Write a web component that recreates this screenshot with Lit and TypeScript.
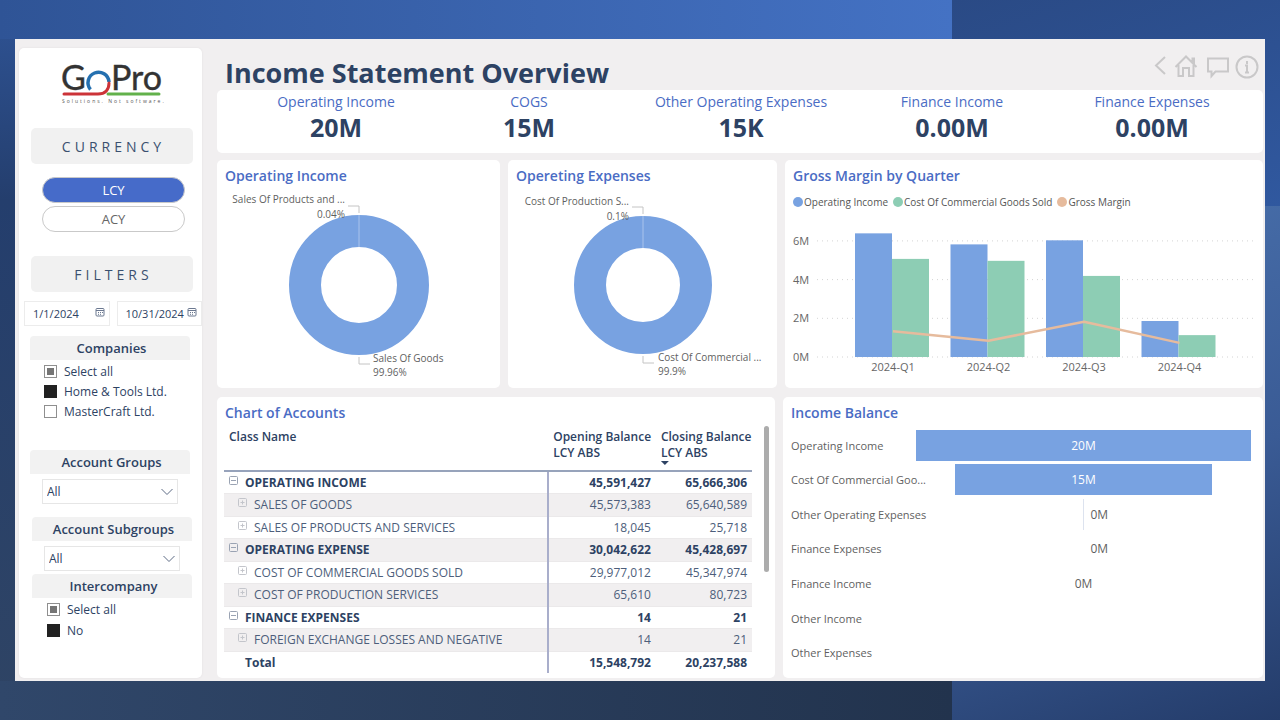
import { LitElement, html, svg, css, nothing } from "lit";
import { customElement, state } from "lit/decorators.js";

interface Option {
  label: string;
  mode: "all" | "on" | "off";
}

interface Donut {
  width: number;
  cx: number;
  outer: number;
  inner: number;
  top: { name: string; share: string; x: number; y: number };
  bottom: { name: string; share: string; x: number; y: number };
}

const KPIS = [
  ["Operating Income", "20M"],
  ["COGS", "15M"],
  ["Other Operating Expenses", "15K"],
  ["Finance Income", "0.00M"],
  ["Finance Expenses", "0.00M"],
];

const COMPANIES: Option[] = [
  { label: "Select all", mode: "all" },
  { label: "Home & Tools Ltd.", mode: "on" },
  { label: "MasterCraft Ltd.", mode: "off" },
];

const INTERCOMPANY: Option[] = [
  { label: "Select all", mode: "all" },
  { label: "No", mode: "on" },
];

const INCOME: Donut = {
  width: 283,
  cx: 142,
  outer: 70,
  inner: 38,
  top: { name: "Sales Of Products and ...", share: "0.04%", x: 128, y: 17 },
  bottom: { name: "Sales Of Goods", share: "99.96%", x: 156, y: 176 },
};

const EXPENSES: Donut = {
  width: 269,
  cx: 135,
  outer: 69,
  inner: 37,
  top: { name: "Cost Of Production S...", share: "0.1%", x: 121, y: 19 },
  bottom: { name: "Cost Of Commercial ...", share: "99.9%", x: 150, y: 175 },
};

const QUARTERS = [
  { name: "2024-Q1", income: 6.39, cost: 5.07, margin: 1.33 },
  { name: "2024-Q2", income: 5.82, cost: 4.97, margin: 0.84 },
  { name: "2024-Q3", income: 6.03, cost: 4.19, margin: 1.82 },
  { name: "2024-Q4", income: 1.86, cost: 1.13, margin: 0.73 },
];

const ACCOUNTS = [
  { name: "OPERATING INCOME", open: "45,591,427", close: "65,666,306", group: true },
  { name: "SALES OF GOODS", open: "45,573,383", close: "65,640,589", group: false },
  { name: "SALES OF PRODUCTS AND SERVICES", open: "18,045", close: "25,718", group: false },
  { name: "OPERATING EXPENSE", open: "30,042,622", close: "45,428,697", group: true },
  { name: "COST OF COMMERCIAL GOODS SOLD", open: "29,977,012", close: "45,347,974", group: false },
  { name: "COST OF PRODUCTION SERVICES", open: "65,610", close: "80,723", group: false },
  { name: "FINANCE EXPENSES", open: "14", close: "21", group: true },
  { name: "FOREIGN EXCHANGE LOSSES AND NEGATIVE", open: "14", close: "21", group: false },
];

const BALANCE = [
  { name: "Operating Income", share: 100, value: "20M", kind: "bar" },
  { name: "Cost Of Commercial Goo...", share: 76.6, value: "15M", kind: "bar" },
  { name: "Other Operating Expenses", share: 0, value: "0M", kind: "tick" },
  { name: "Finance Expenses", share: 0, value: "0M", kind: "side" },
  { name: "Finance Income", share: 0, value: "0M", kind: "mid" },
  { name: "Other Income", share: 0, value: "", kind: "none" },
  { name: "Other Expenses", share: 0, value: "", kind: "none" },
];

@customElement("app-root")
export class AppRoot extends LitElement {
  @state() private currency = "LCY";

  static styles = css`
    :host {
      display: block;
      font-family: "Open Sans", "Noto Sans", sans-serif;
      color: #2d4263;
    }
    * { box-sizing: border-box; }
    button, input, select { font: inherit; color: inherit; margin: 0; }

    .page {
      display: flex;
      min-height: 100vh;
      padding: 39px 15px;
      background:
        linear-gradient(160deg, #2a4a85 0%, #30589f 100%) 100% 0 / 328px 206px no-repeat,
        linear-gradient(160deg, #4a72ae 0%, #3a5b95 55%, #243c6a 100%) 100% 100% / 328px calc(100% - 206px) no-repeat,
        linear-gradient(90deg, #2f5496, #4472c4 952px) 0 0 / 100% 39px no-repeat,
        linear-gradient(90deg, #30476a, #22334d 952px) 0 100% / 100% 39px no-repeat,
        linear-gradient(180deg, #2f5496 0, #243e6d 200px, #2f4464 100%);
    }
    .board {
      flex: 1;
      min-width: 0;
      display: grid;
      grid-template-columns: 183px minmax(0, 1fr);
      gap: 15px;
      padding: 9px 2px 3px 4px;
      background: #f1eff0;
    }
    .card { background: #fff; border-radius: 5px; min-width: 0; }

    /* Sidebar */
    .side { display: flex; flex-direction: column; box-shadow: 0 0 2px #e0dcde; }
    .logo { display: block; width: 110px; height: 46px; margin: 13px 0 21px 41px; }
    .band {
      margin: 0 9px 0 12px;
      height: 36px;
      padding-left: 3px;
      line-height: 37px;
      border-radius: 5px;
      background: #f1f1f1;
      text-align: center;
      font-size: 14px;
      font-weight: 400;
      letter-spacing: 4px;
      color: #3a506f;
    }
    .pills { display: flex; flex-direction: column; gap: 3px; margin: 13px 17px 24px 23px; }
    .pill {
      height: 26px;
      padding: 0;
      border: 1px solid #c9c9c9;
      border-radius: 13px;
      background: #fff;
      color: #666;
      font-size: 13px;
      cursor: pointer;
    }
    .pill.on { background: #466bc9; color: #fff; }
    .dates { display: flex; gap: 7px; margin: 9px 0 10px 5px; }
    .date {
      flex: 1;
      display: flex;
      align-items: center;
      height: 25px;
      padding: 0 4px 0 8px;
      border: 1px solid #ececec;
    }
    .date input {
      width: 100%;
      min-width: 0;
      padding: 0;
      border: 0;
      outline: 0;
      background: none;
      font-size: 11px;
    }
    .date svg { flex: none; width: 10px; height: 10px; margin-bottom: 3px; }
    .head {
      margin: 0 12px 0 11px;
      height: 24px;
      padding-left: 3px;
      line-height: 24px;
      border-radius: 4px 4px 0 0;
      background: #f2f2f2;
      text-align: center;
      font-size: 13px;
      font-weight: 600;
    }
    .head.in { margin: 0 10px 0 13px; }
    .checks { display: flex; flex-direction: column; gap: 1px; padding: 1px 0 0 25px; }
    .checks.in { padding-left: 28px; }
    .checks.tall { gap: 0; height: 90px; }
    .check {
      display: flex;
      align-items: center;
      gap: 7px;
      height: 20px;
      font-size: 12px;
      white-space: nowrap;
    }
    .check input {
      appearance: none;
      width: 13px;
      height: 13px;
      border: 1px solid #8f8f8f;
      background: #fff;
    }
    .check input:checked { background: #212121; border-color: #212121; }
    .check input:indeterminate {
      background: linear-gradient(#757575, #757575) center / 7px 7px no-repeat;
      border-color: #8f8f8f;
    }
    .pick {
      display: grid;
      align-items: center;
      height: 25px;
      margin: 5px 24px 13px 23px;
      border: 1px solid #e6e6e6;
    }
    .pick.in { margin: 5px 22px 3px 25px; }
    .pick select, .pick svg { grid-area: 1 / 1; }
    .pick select {
      appearance: none;
      height: 23px;
      padding: 0 4px;
      border: 0;
      background: none;
      font-size: 12px;
    }
    .pick svg { justify-self: end; width: 12px; height: 8px; margin-right: 4px; pointer-events: none; }

    /* Main column */
    .main { display: flex; flex-direction: column; min-width: 0; }
    .top {
      display: flex;
      justify-content: space-between;
      height: 42px;
      padding: 6px 4px 0 8px;
    }
    h1 { margin: 0; font-size: 27px; line-height: 38px; font-weight: 700; white-space: nowrap; }
    .tools { display: flex; align-items: flex-start; gap: 8px; }
    .tool { padding: 0; border: 0; background: none; height: 26px; cursor: pointer; }
    .tool:last-child { margin-left: -3px; }
    .tool svg { display: block; height: 26px; fill: none; stroke: #c9c8c9; stroke-width: 2; }
    .kpis {
      display: grid;
      grid-template-columns: 196fr 190fr 234fr 188fr 212fr;
      padding: 2px 5px 11px 21px;
      margin-bottom: 7px;
      text-align: center;
      white-space: nowrap;
    }
    .kpi-name { font-size: 14px; line-height: 20px; color: #4a6cc4; }
    .kpi-value { font-size: 25px; line-height: 30px; font-weight: 700; }
    .row { display: grid; gap: 8px; }
    .row.upper { grid-template-columns: 283fr 269fr 478fr; margin-bottom: 9px; }
    .row.lower { grid-template-columns: 558fr 480fr; flex: 1; }
    h2 {
      margin: 0;
      padding: 5px 8px 0;
      font-size: 14px;
      line-height: 21px;
      font-weight: 600;
      color: #4a6cc4;
    }
    .chart { display: block; width: 100%; height: auto; font-size: 11px; fill: #666; }
    .chart.ring { font-size: 10px; fill: #5f5f5f; }
    .legend {
      display: flex;
      gap: 5px;
      padding: 6px 8px 0;
      font-size: 10px;
      line-height: 20px;
      color: #555;
      white-space: nowrap;
    }
    .key { display: flex; align-items: center; gap: 1px; }
    .dot { width: 10px; height: 10px; border-radius: 50%; }
    .dot.a { background: #78a2e1; }
    .dot.b { background: #8dcdb4; }
    .dot.c { background: #e6bb9d; }

    /* Accounts table */
    .panel { display: flex; flex-direction: column; }
    .sheet { display: flex; gap: 12px; padding: 0 6px 0 7px; }
    table {
      width: 100%;
      border-collapse: collapse;
      table-layout: fixed;
      font-size: 12px;
      line-height: 16px;
    }
    .c1 { width: 61.4%; }
    .c2 { width: 20.4%; }
    th, td { padding: 1px 5px 0; text-align: right; white-space: nowrap; }
    thead th { height: 48px; padding-top: 6px; text-align: left; vertical-align: top; font-weight: 600; border-bottom: 2px solid #97a3bb; }
    .sort { display: block; width: 8px; height: 4px; background: #2d4263; clip-path: polygon(0 0, 100% 0, 50% 100%); }
    tbody tr, tfoot tr { height: 22px; }
    tbody tr:nth-child(even) { height: 23px; background: #f1eff0; }
    tbody tr { border-bottom: 1px solid #ebe9ea; }
    tbody th, tfoot th { text-align: left; font-weight: 400; border-right: 2px solid #a9aecb; }
    tbody td, tbody th { color: #4d5e7b; }
    .group th, .group td, tfoot th, tfoot td { font-weight: 700; color: #2d4263; }
    .name { display: flex; align-items: center; gap: 7px; }
    .name svg { flex: none; width: 9px; height: 9px; margin-bottom: 5px; fill: none; stroke: #9aa3b3; }
    .leaf .name { padding-left: 9px; }
    .leaf .name svg { stroke: #c3c5cb; }
    tfoot th { padding-left: 21px; }
    .scroll { flex: none; width: 5px; height: 146px; margin-top: 3px; border-radius: 3px; background: #acacac; }

    /* Income balance */
    .funnel { flex: 1; display: grid; grid-auto-rows: 1fr; padding: 5px 12px 8px 8px; font-size: 12px; color: #5f5f5f; }
    .step { display: grid; grid-template-columns: 125px minmax(0, 1fr); align-items: center; white-space: nowrap; }
    .step-name { font-size: 11px; }
    .track { display: grid; grid-template-columns: 1fr; height: 31px; align-items: center; }
    .fill {
      display: grid;
      place-items: center;
      justify-self: center;
      height: 31px;
      background: #78a2e1;
      color: #fff;
    }
    .tick { padding-left: calc(50% + 7px); background: linear-gradient(#dde3ef, #dde3ef) center / 1px 31px no-repeat; line-height: 31px; }
    .side-value { padding-left: calc(50% + 7px); }
    .mid { text-align: center; }
  `;

  private checks(id: string, options: Option[], cls: string) {
    return html`<div class="checks ${cls}" role="group" aria-label=${id}>
      ${options.map(
        (o) => html`<label class="check">
          <input type="checkbox" .checked=${o.mode === "on"} .indeterminate=${o.mode === "all"} />${o.label}
        </label>`
      )}
    </div>`;
  }

  private date(label: string, value: string) {
    return html`<label class="date">
      <input type="text" aria-label=${label} value=${value} />
      <svg viewBox="0 0 10 10" fill="none" stroke="#6b7890">
        <rect x="1" y="1.5" width="8" height="7.5" rx="1" />
        <path d="M1 3.5h8M3 5.5h1M5 5.5h1M7 5.5h1M3 7.3h1M5 7.3h1" />
      </svg>
    </label>`;
  }

  private pick(label: string, cls: string) {
    return html`<div class="pick ${cls}">
      <select aria-label=${label}><option>All</option></select>
      <svg viewBox="0 0 12 8" fill="none" stroke="#5c6b84"><path d="M.5 1 6 6.5 11.5 1" /></svg>
    </div>`;
  }

  private donut(d: Donut) {
    const cy = 99;
    const mid = (d.outer + d.inner) / 2;
    const up = cy - d.outer;
    const down = cy + d.outer;
    return html`<svg class="chart ring" viewBox="0 0 ${d.width} 202" role="img">
      <circle cx=${d.cx} cy=${cy} r=${mid} fill="none" stroke="#78a2e1" stroke-width=${d.outer - d.inner} />
      <path d="M${d.cx} ${up}V${cy - d.inner}" stroke="#a9c3ec" />
      <path
        d="M${d.cx - 11} ${up - 9}H${d.cx}V${up - 2}M${d.cx} ${down + 2}V${down + 9}H${d.cx + 11}"
        fill="none" stroke="#c4c4c4"
      />
      <text x=${d.top.x} y=${d.top.y} text-anchor="end">${d.top.name}</text>
      <text x=${d.top.x} y=${d.top.y + 15} text-anchor="end">${d.top.share}</text>
      <text x=${d.bottom.x} y=${d.bottom.y}>${d.bottom.name}</text>
      <text x=${d.bottom.x} y=${d.bottom.y + 14}>${d.bottom.share}</text>
    </svg>`;
  }

  private combo() {
    const base = 145;
    const unit = 19.35;
    const centre = (i: number) => 107 + i * 95.5;
    const points = QUARTERS.map((q, i) => `${centre(i) + 1},${base - q.margin * unit}`).join(" ");
    return html`<svg class="chart" viewBox="0 0 478 175" role="img">
      ${[0, 2, 4, 6].map(
        (v) => svg`
          <path d="M32 ${base - v * unit}H470" stroke="#d4d4d4" stroke-width="1" stroke-dasharray="1 4" />
          <text x="8" y=${base - v * unit + 4}>${v}M</text>`
      )}
      ${QUARTERS.map(
        (q, i) => svg`
          <rect x=${centre(i) - 37} y=${base - q.income * unit} width="37" height=${q.income * unit} fill="#78a2e1" />
          <rect x=${centre(i)} y=${base - q.cost * unit} width="37" height=${q.cost * unit} fill="#8dcdb4" />
          <text x=${centre(i) + 1} y=${base + 14} text-anchor="middle">${q.name}</text>`
      )}
      <polyline points=${points} fill="none" stroke="#e6bb9d" stroke-width="2.5" stroke-linejoin="round" />
    </svg>`;
  }

  private accounts() {
    return html`<div class="sheet">
      <table>
        <colgroup><col class="c1" /><col class="c2" /><col /></colgroup>
        <thead>
          <tr>
            <th scope="col">Class Name</th>
            <th scope="col">Opening Balance<br />LCY ABS</th>
            <th scope="col">Closing Balance<br />LCY ABS<span class="sort"></span></th>
          </tr>
        </thead>
        <tbody>
          ${ACCOUNTS.map(
            (a) => html`<tr class=${a.group ? "group" : "leaf"}>
              <th scope="row">
                <div class="name">
                  <svg viewBox="0 0 9 9">
                    <rect x=".5" y=".5" width="8" height="8" rx="1" />
                    <path d=${a.group ? "M2 4.5h5" : "M2.5 4.5h4M4.5 2.5v4"} />
                  </svg>
                  <span>${a.name}</span>
                </div>
              </th>
              <td>${a.open}</td>
              <td>${a.close}</td>
            </tr>`
          )}
        </tbody>
        <tfoot>
          <tr><th scope="row">Total</th><td>15,548,792</td><td>20,237,588</td></tr>
        </tfoot>
      </table>
      <div class="scroll"></div>
    </div>`;
  }

  private track(b: (typeof BALANCE)[number]) {
    switch (b.kind) {
      case "bar":
        return html`<div class="fill" style="width:${b.share}%">${b.value}</div>`;
      case "tick":
        return html`<div class="tick">${b.value}</div>`;
      case "side":
        return html`<div class="side-value">${b.value}</div>`;
      case "mid":
        return html`<div class="mid">${b.value}</div>`;
      default:
        return nothing;
    }
  }

  render() {
    return html`<div class="page">
      <div class="board">
        <aside class="card side">
          <svg class="logo" viewBox="0 0 110 46" role="img" aria-label="GoPro">
            <g font-family="Lato" font-size="34" fill="#333" stroke="#333" stroke-width=".4">
              <text x="1" y="29">G</text>
              <text x="51" y="29">Pro</text>
            </g>
            <path d="M30.5 28.5A10.5 10.5 0 1 1 49 21" fill="none" stroke="#2570b0" stroke-width="3.5" />
            <path d="M4 33H38C45 33 49 29 49 22" fill="none" stroke="#cc3338" stroke-width="3" stroke-linecap="round" />
            <path d="M48 33H99" fill="none" stroke="#62b14b" stroke-width="3" stroke-linecap="round" />
            <text x="2" y="42" font-size="5" letter-spacing="2" fill="#555">Solutions. Not software.</text>
          </svg>
          <div class="band">CURRENCY</div>
          <div class="pills">
            ${["LCY", "ACY"].map(
              (c) => html`<button
                class="pill ${this.currency === c ? "on" : ""}"
                aria-pressed=${this.currency === c}
                @click=${() => (this.currency = c)}
              >${c}</button>`
            )}
          </div>
          <div class="band">FILTERS</div>
          <div class="dates">${this.date("From", "1/1/2024")}${this.date("To", "10/31/2024")}</div>
          <div class="head">Companies</div>
          ${this.checks("Companies", COMPANIES, "tall")}
          <div class="head">Account Groups</div>
          ${this.pick("Account Groups", "")}
          <div class="head in">Account Subgroups</div>
          ${this.pick("Account Subgroups", "in")}
          <div class="head in">Intercompany</div>
          ${this.checks("Intercompany", INTERCOMPANY, "in")}
        </aside>

        <main class="main">
          <header class="top">
            <h1>Income Statement Overview</h1>
            <nav class="tools">
              <button class="tool" aria-label="Back">
                <svg width="12" viewBox="0 0 12 26"><path d="M11 3 2 11.5 11 20" /></svg>
              </button>
              <button class="tool" aria-label="Home">
                <svg width="24" viewBox="0 0 24 26">
                  <path d="M1.5 13 12 2.500 22.500 13M18.500 9V4.500h1.500v6M4.500 11v11h4.500v-8h6v8h4.500V11" />
                </svg>
              </button>
              <button class="tool" aria-label="Comments">
                <svg width="24" viewBox="0 0 24 26"><path d="M2 4.500h20v13H9.500L5.500 22v-4.500H2z" /></svg>
              </button>
              <button class="tool" aria-label="Information">
                <svg width="24" viewBox="0 0 24 26">
                  <circle cx="12" cy="13" r="10.500" />
                  <path d="M12 7v3M10 11.500h2V18M10 18.500h4" />
                </svg>
              </button>
            </nav>
          </header>

          <section class="card kpis">
            ${KPIS.map(
              ([name, value]) => html`<div>
                <div class="kpi-name">${name}</div>
                <div class="kpi-value">${value}</div>
              </div>`
            )}
          </section>

          <div class="row upper">
            <section class="card"><h2>Operating Income</h2>${this.donut(INCOME)}</section>
            <section class="card"><h2>Opereting Expenses</h2>${this.donut(EXPENSES)}</section>
            <section class="card">
              <h2>Gross Margin by Quarter</h2>
              <div class="legend">
                <span class="key"><i class="dot a"></i>Operating Income</span>
                <span class="key"><i class="dot b"></i>Cost Of Commercial Goods Sold</span>
                <span class="key"><i class="dot c"></i>Gross Margin</span>
              </div>
              ${this.combo()}
            </section>
          </div>

          <div class="row lower">
            <section class="card panel"><h2>Chart of Accounts</h2>${this.accounts()}</section>
            <section class="card panel">
              <h2>Income Balance</h2>
              <div class="funnel">
                ${BALANCE.map(
                  (b) => html`<div class="step"><span class="step-name">${b.name}</span><div class="track">${this.track(b)}</div></div>`
                )}
              </div>
            </section>
          </div>
        </main>
      </div>
    </div>`;
  }
}
